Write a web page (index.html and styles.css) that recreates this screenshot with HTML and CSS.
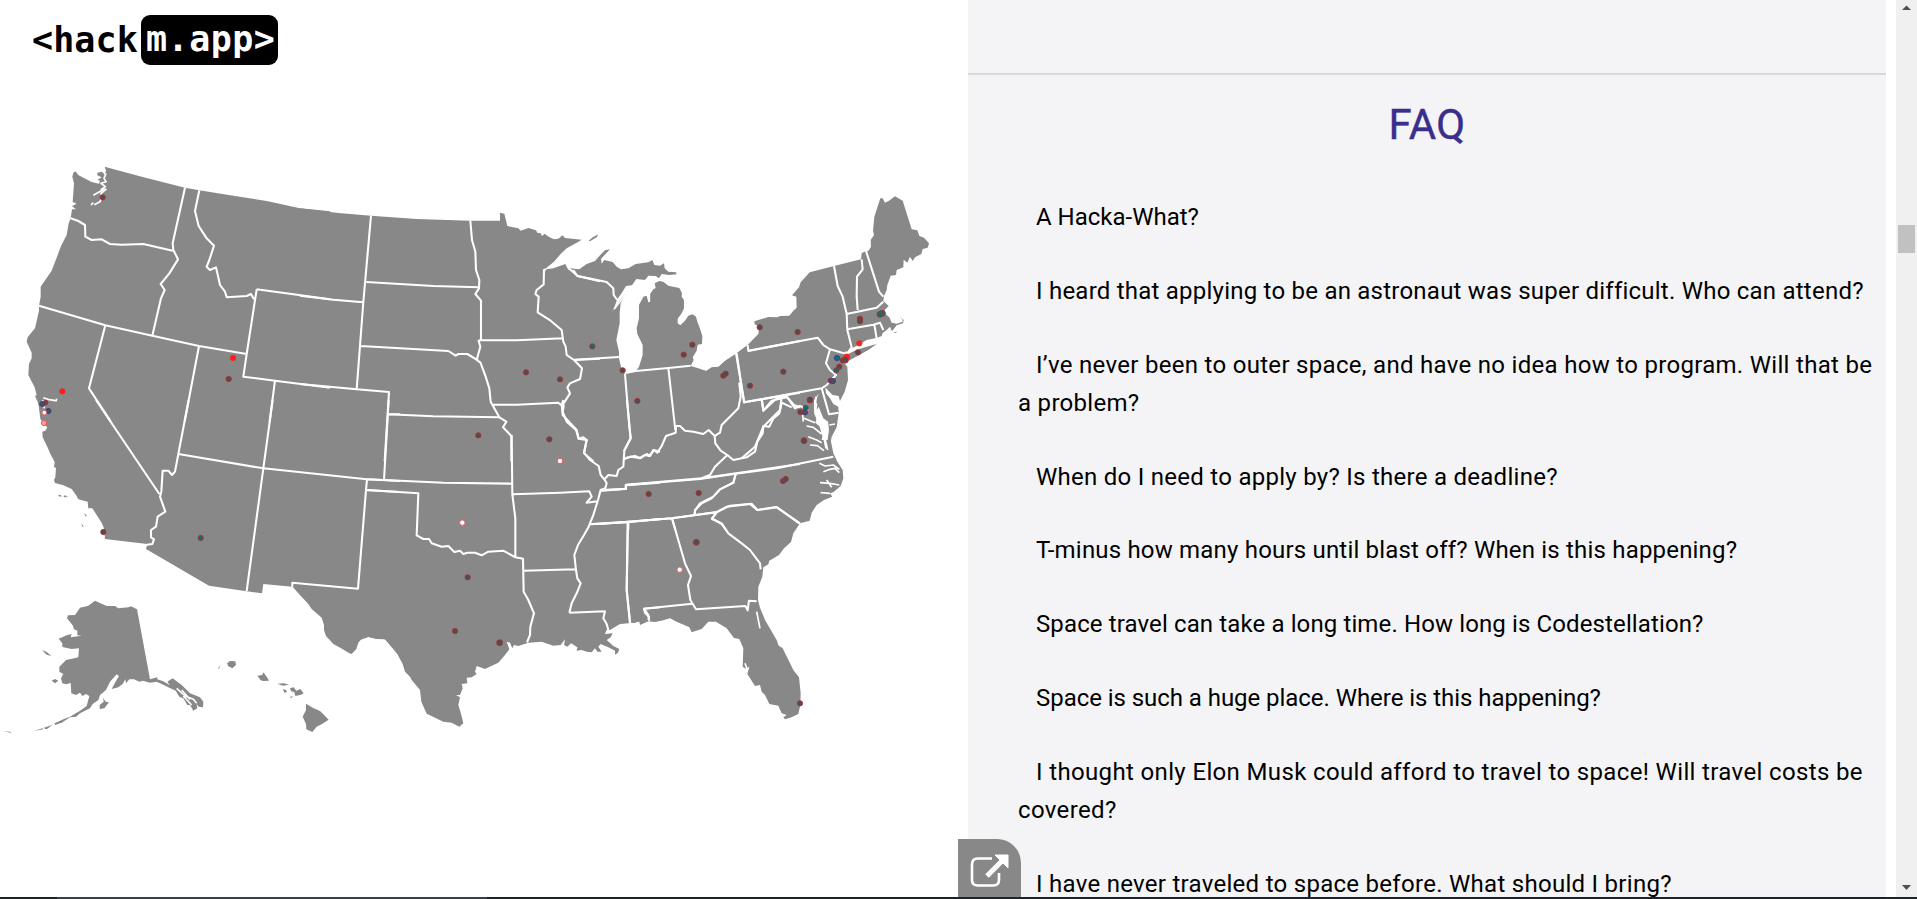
FILE: index.html
```
<!DOCTYPE html>
<html lang="en">
<head>
<meta charset="utf-8">
<title>hackm.app</title>
<link rel="stylesheet" href="styles.css">
</head>
<body>
<div class="page">
<main class="map-pane">
<header class="logo"><span class="logo-plain">&lt;hack</span><span class="logo-box">m.app&gt;</span></header>
<svg class="map" viewBox="0 0 2850 2694">
<g class="land">
<g transform="translate(0 420)">
<path d="M217 110L220 98L226 94L236 106L256 116L275 126L297 131L300 122L292 120L305 112L292 106L292 98L306 95L314 104L318 92L314 80L425 110L555 143L598 151L700 167L800 183L900 205L990 214V840H122L119 810L113 785L105 768L110 766L104 742L85 705L87 672L95 655L95 638L80 605L83 592L105 565L117 512L117 497L122 470L122 440L155 392L175 340L183 318L200 285L206 250L212 235L216 208L228 208L216 198L230 191L218 186L222 130Z"/>
</g>
<g transform="translate(0 1200)">
<path d="M120 0H1200V775L1190 755L1155 718L1128 717L1105 710L1085 716L1075 728L1069 747L1055 762L1048 760L1022 744L1000 732L978 708L972 690L972 675L965 653L935 627L925 612L895 580L878 560L790 552L786 580L740 574L627 557L438 447L442 432L315 417L312 385L305 368L290 345L277 325L265 325L263 305L235 298L228 285L215 267L190 256L165 249L162 240L166 232L168 205L162 200L164 186L150 160L144 145L128 112L127 95L136 92L142 82L128 70L120 50L117 20Z"/>
<path d="M175 284l8 2l2 4l-9-1zM190 289l6-4l2 4l8 2l-12 1zM252 340l8 6l-2 5zM243 370l8 9l-3 2zM196 340h5z"/>
<path d="M411 628L450 838L472 832L472 838L490 844L510 856L502 845L518 835L545 855L570 880L600 892L610 905L609 922L596 920L590 912L592 925L580 932L570 915L562 915L550 895L538 890L527 872L505 862L480 850L470 845L450 848L428 842L418 845L402 838L388 838L378 850L376 838L368 852L355 862L335 867L345 848L357 828L350 823L330 845L318 870L300 885L295 900L278 912L270 925L240 940L228 950L210 952L185 968L162 972L190 958L210 950L240 932L260 918L268 888L258 882L247 888L240 878L228 885L214 880L212 848L200 853L187 850L183 835L190 822L178 815L178 800L198 780L216 776L235 772L237 745L215 747L187 741L187 730L176 716L200 706L215 702L212 712L245 707L232 706L232 692L222 688L218 676L201 655L204 646L225 645L240 623L265 617L285 602L295 607L320 618L345 618L355 625L385 622L393 619Z"/>
<path d="M299 915l12-10l-2-12l8 12l10 2l-14 18l-14 2zM126 750l14 6l14 12l-14-4zM155 842l10-5l10 5l-10 8zM95 815l6 7zM163 970l20-8l8 3l-25 10zM130 984l28-10l-18 14zM102 993l25-8l3 3zM12 994l18 1l6 5l-10-3zM40 998h30z"/>
<path d="M681 790L690 783L706 784L708 795L697 805L685 799zM652 808l5-7l5-5l-4 8zM772 827l15-2l3-8l12 16l5 9l-17 1l-8-2zM832 851l20-1l15 4l-18 3zM848 867l10 3l3 5l-7 4zM868 892l10-4l-2 5zM870 865l11-3l8 10l12-5l10 13l-8 4l-17 4l-3-12l-10-2zM918 911l20 12l22 10l13 13l13 13l-20 13l-16 8l-13 16l-18-8l-1-16l-10-22l10-20z"/>
</g>
<g transform="translate(900 540)">
<path d="M0 85L115 99L213 107L350 117L510 122H600V98L613 101L622 138L655 145L662 152L685 144L708 151L712 158L722 160L726 168L734 161L746 170L762 178L775 176L788 166L795 174L845 179L833 187L800 205L782 222L762 245L738 265V840H0Z"/>
<path d="M866 182L878 172L895 163L890 172L870 184Z"/>
</g>
<g transform="translate(1560 600)">
<path d="M78 208L100 205L136 192L145 210L150 205L178 208L200 192L225 183L240 166L255 151L270 148L243 176L245 191L253 180L278 186L290 200L303 208L325 205L347 192L385 187L397 180L403 195L420 197L432 190L434 205L445 215L468 217L470 223L448 225L425 222L417 235L407 228L385 227L376 240L349 237L336 256L318 258L305 280L292 297L282 325L276 335L288 318L300 300L325 270L313 290L302 310L299 340L299 370L289 420L297 455L297 475L303 500L315 523L345 516L357 500L368 465L368 435L352 402L350 385L357 355L357 325L357 315L370 290L380 287L385 307L390 305L388 285L400 268L407 264L404 250L418 243L430 245L445 257L478 264L486 280L485 290L492 300L492 325L485 340L473 356L473 370L481 376L495 362L505 347L518 343L528 350L532 365L538 380L547 408L546 432L533 434L530 452L518 472L521 480L512 498L540 506L558 513L575 502L597 500L615 483L650 460L683 435L840 460V900L780 990H0V208Z"/>
</g>
<g transform="translate(2100 540)">
<path d="M0 569L20 573L35 563L55 561L75 543L108 522L142 496L175 462L178 440L164 433L163 424L205 411L232 412L240 408L268 407L280 392L290 383L289 350L276 346L297 322L302 307L329 277L402 258L483 238L485 220L493 215L505 213L513 200L512 180L522 165L519 152L523 110L541 55L548 55L555 68L567 62L585 49L608 62L635 148L652 151L658 168L672 173L687 190L683 203L668 207L664 222L645 232L638 243L630 230L622 248L611 239L610 262L590 270L588 285L572 287L562 315L560 330L552 348L550 363L566 378L554 390L557 403L568 412L575 428L590 431L608 425L606 415L598 410L611 420L609 430L590 436L576 454L570 440L560 450L548 459L545 468L532 473L500 480L475 495L450 508L443 523L470 509L500 500L530 492L505 510L478 525L440 545L435 552L442 560L444 600L434 635L420 663L416 648L398 645L385 632L376 622L378 640L390 655L400 672L415 680L416 700L410 742L395 770L390 797L382 785L387 750L384 725L370 715L362 695L356 680L350 690L352 672L346 665L357 640L342 660L342 690L350 715L346 728L360 740L368 768L362 790L380 812L395 812L400 840H0Z"/>
<path d="M580 457l12-2l-5 4zM612 456h6z"/>
</g>
<g transform="translate(1080 1200)">
<path d="M0 0H900V660L760 672L740 688L735 702L758 700L752 712L740 720L760 738L778 747L774 758L765 764L765 752L745 742L722 732L715 740L725 755L712 755L705 745L695 757L680 755L665 750L650 752L652 742L633 730L622 740L612 735L615 718L602 735L580 737L545 725L505 728L475 738L462 735L457 745L450 728L440 725L448 748L435 765L415 788L375 807L350 798L345 815L350 822L335 832L320 833L322 850L305 852L308 865L300 885L288 885L300 892L295 915L304 945L310 970L298 980L275 968L250 965L200 941L184 905L180 870L155 840L150 830L135 815L128 792L112 762L75 718L45 715L25 711L0 720Z"/>
</g>
<g transform="translate(1800 1320)">
<path d="M0 0H692L700 40L712 65L728 90L730 115L722 138L700 157L690 160L697 170L672 180L650 195L635 218L629 242L600 250L580 280L573 306L552 325L537 345L508 362L505 373L490 382L487 410L475 440L474 480L480 503L495 540L530 600L535 615L548 625L580 690L597 712L602 760L601 795L595 822L575 832L555 838L550 832L560 825L545 820L535 797L508 792L495 765L485 755L480 735L465 738L442 702L448 680L437 686L428 680L430 625L418 597L402 594L380 565L348 545L325 545L305 567L275 577L268 562L230 545L210 535L190 541L165 546L145 544L120 555L115 530L108 548L85 550L60 552L30 570H0Z"/>
</g>
</g>
<g class="water">
<path transform="translate(0 420)" d="M318 100L312 115L318 125L303 130L316 140L304 148L318 148L303 160L306 170L300 185L283 194M308 150L280 166M280 188L273 195M130 773L148 779L166 782M170 776L168 784M128 780L133 805"/>
<path transform="translate(2100 540)" d="M348 650L345 700L360 735L372 775L378 805M308 705L310 725M312 715L330 722L345 728M320 738L340 742L365 762M325 770L350 780L365 788M330 795L352 797L372 812M382 725L376 780L383 810M388 735L405 732M443 522L436 515M390 645L410 655"/>
<path transform="translate(1800 1320)" d="M658 70L675 78L700 75L718 88M670 95L690 88L705 85L718 98M660 128L690 130L718 135M662 158L690 160M695 142L680 120M470 515L475 540L480 565M535 603L542 620M435 670L442 690"/>
<path transform="translate(0 1200)" d="M530 865L555 888L580 898L590 910M545 870L570 898M550 888L575 915"/>
<path transform="translate(1560 600)" d="M332 258L308 295L282 328M384 235L362 253M388 280V305"/>
</g>
<g class="borders">
<path transform="translate(0 420)" d="M555 143L518 310L520 330L534 358L508 400L482 432L494 450L483 475L457 587M212 235L235 243L255 255L256 290L275 300L305 298L330 312L365 314L430 312L518 332M598 151L585 213L596 258L620 295L642 317L628 360L620 380L630 390L648 382L660 435L675 455L680 472L740 468L753 462L762 478M770 448L740 642L730 710L825 722L990 743M770 448L990 478M117 497L316 556L457 587L597 618L740 642M316 556L267 745L332 844M597 618L554 844M825 722L809 844"/>
<path transform="translate(0 1200)" d="M288 0L478 282M566 0L535 162L525 215L516 225L505 212L488 212L484 275L480 290L496 335L473 350L468 380L453 390L453 412L462 418L457 432L440 434M535 162L790 205L1100 238L1200 243M818 0L790 205L740 573M1166 0L1152 240M1164 43H1200M1101 238L1098 270L1074 566L877 548V560M1098 270L1200 276"/>
<path transform="translate(900 540)" d="M213 107L190 366L170 628M0 347L100 359L190 367M199 306L400 318L537 322M182 498L445 513L467 527L475 522L502 522L535 542M0 612L170 628L267 636L254 844M264 703L400 709L598 712M511 122L516 180L526 215L528 270L538 300L537 325L526 342L543 362V480L536 482L541 500L530 540L541 547L557 590L568 625L572 665L598 712L619 725L609 742L634 768V844M538 481L650 481L790 475M738 268L732 270L731 313L710 330L706 342L716 350L713 397L752 422L785 450L790 485L797 500L800 525L822 540L846 565L840 597L810 610L802 622L810 640L791 670L790 680M576 674L650 674L774 668L791 680L788 695L800 725L828 750L836 776L850 772L860 780L852 820L880 844M822 540L900 536M820 270L832 288L900 304"/>
<path transform="translate(1080 1200)" d="M20 238L72 240L250 248L456 251M19 270L175 280L170 406L190 417L207 417L215 430L245 440L265 438L283 456L300 452L310 462L322 458L345 458L365 466L385 455L430 452L466 472L489 476L491 575L505 600L522 640L511 680L510 705L501 727M455 105L457 283L466 355V472M458 283L600 278L688 274L695 290L680 308L712 304M490 512L647 508M723 270L797 267V256L900 248M692 373L803 367L900 357M803 367L800 570L810 672M628 638L735 634L730 655L740 672L745 690M610 0L605 15L608 45L650 90L656 116L680 120L672 158L690 180L716 198L722 225L733 238L740 250L736 265L722 270L714 300L700 345L686 380L672 405L654 435L643 465L648 510L652 535L662 550L650 580L635 610L628 638M733 238L745 225L770 228L775 210L790 200L793 152L812 115L801 0M793 175L815 170L840 175L860 162L870 168L880 150L900 155M900 622L852 626L865 645L866 660"/>
<path transform="translate(1560 600)" d="M148 206L173 228L260 246L280 265L281 285L292 300M163 479L297 471M315 522L328 680L332 715L312 752M315 516L445 504L512 497M445 504L466 690M312 778L330 770L345 768L360 774L375 765L388 768L402 750L412 758L425 738L438 708L467 698L468 678L480 678L495 692L520 695L550 702L566 690L584 708L600 698L605 675L620 660L635 645L655 625L662 590L658 550L664 570M650 460L672 607L840 578M683 435L685 453L840 423M584 708L586 730L602 752L622 765L640 780L680 772L705 755L712 725L728 700L730 678L748 680L760 655L778 640L785 608M725 598L730 632L755 602L785 595L800 590L822 615L840 622M785 608L815 622M622 765L585 800L570 825L540 836M260 870L318 866V854L545 835L648 820L840 792M648 820L640 848L600 868L575 895L545 910L525 930L524 942M215 972L325 965L456 955L590 937M325 965V990M456 955L466 990M690 912L620 920L590 937L576 955L605 972L618 990M690 912L712 930L770 922L840 970"/>
<path transform="translate(2100 540)" d="M402 258L413 318L428 350L440 402L442 450L455 502L440 522M485 238L488 268L471 290L470 350L473 390M498 213L537 335L550 350M440 402L530 383L550 365M442 448L520 434L540 428L550 450M523 434L530 475M145 512L353 473L370 495L390 508L440 522M390 508L378 550L390 570L408 585L380 615L365 625L133 667L108 520M365 625L387 703L416 698M410 660L416 658M186 660L190 692L230 655L262 652L285 685L300 678L325 690M245 650L240 690L190 740L165 800L125 835"/>
<path transform="translate(1800 1320)" d="M0 153L78 146V135L300 117L407 101L530 85L700 50M407 101L400 128L360 148L340 170L300 190L285 212L284 222M0 252L216 235L350 216L390 197L455 191L472 210L530 201L598 250M350 216L336 237L365 250L385 280L425 310L450 330L480 370L482 388M84 246L80 450L91 552M216 235L255 370L273 408L264 435L271 480L288 508L436 498L443 511L447 482L470 484M276 491L132 506L135 518L147 530V542"/>
</g>
<g class="pins">
<g transform="translate(0 420)"><circle cx="308" cy="172" r="8"/><circle class="hot" cx="699" cy="654" r="8"/><circle cx="686" cy="717" r="8"/><circle class="hot" cx="187" cy="754" r="8"/><circle cx="137" cy="788" r="7"/><circle class="blue" cx="127" cy="792" r="8"/><circle class="blue" cx="145" cy="813" r="8"/><circle class="open" cx="133" cy="818" r="7"/><circle class="pink" cx="132" cy="849" r="8"/></g>
<g transform="translate(0 1200)"><circle cx="310" cy="396" r="8"/><circle class="teal" cx="602" cy="414" r="8"/></g>
<g transform="translate(1080 1200)"><circle cx="355" cy="106" r="8"/><circle cx="568" cy="118" r="8"/><circle class="open" cx="600" cy="183" r="8"/><circle class="open" cx="307" cy="368" r="8"/><circle cx="323" cy="532" r="8"/><circle cx="285" cy="693" r="8"/><circle cx="419" cy="728" r="9"/></g>
<g transform="translate(1560 600)"><circle class="teal" cx="217" cy="439" r="8"/><circle cx="18" cy="517" r="8"/><circle cx="120" cy="538" r="8"/><circle cx="308" cy="511" r="8"/><circle cx="352" cy="603" r="8"/><circle cx="491" cy="464" r="8"/><circle cx="517" cy="434" r="8"/><circle cx="610" cy="527" r="8"/><circle cx="617" cy="521" r="8"/></g>
<g transform="translate(2100 540)"><circle cx="179" cy="442" r="8"/><circle cx="293" cy="456" r="8"/><circle cx="250" cy="575" r="8"/><circle cx="150" cy="617" r="8"/><circle cx="480" cy="416" r="8"/><circle cx="480" cy="424" r="8"/><circle class="teal" cx="547" cy="400" r="9"/><circle class="teal" cx="540" cy="403" r="9"/><circle class="hot" cx="478" cy="490" r="8"/><circle cx="474" cy="517" r="8"/><circle class="hot" cx="440" cy="531" r="9"/><circle cx="428" cy="541" r="8"/><circle cx="436" cy="540" r="9"/><circle class="teal blue-rim" cx="411" cy="534" r="8"/><circle cx="418" cy="560" r="8"/><circle class="teal" cx="409" cy="571" r="8"/><circle cx="392" cy="602" r="8"/><circle class="blue" cx="399" cy="603" r="8"/><circle cx="330" cy="660" r="9"/><circle class="teal" cx="317" cy="684" r="8"/><circle class="blue" cx="315" cy="697" r="8"/><circle cx="301" cy="696" r="8"/><circle cx="312" cy="782" r="9"/></g>
<g transform="translate(1800 1320)"><circle cx="146" cy="162" r="8"/><circle cx="296" cy="159" r="8"/><circle cx="549" cy="123" r="8"/><circle cx="557" cy="117" r="8"/><circle cx="289" cy="307" r="9"/><circle class="open" cx="239" cy="389" r="8"/><circle cx="600" cy="790" r="8"/></g>
</g>
</svg>
</main>
<aside class="site">
<hr class="rule">
<h1 class="title">FAQ</h1>
<ul class="questions">
<li class="q1">A Hacka-What?</li>
<li class="q2">I heard that applying to be an astronaut was super difficult. Who can attend?</li>
<li class="q3">I’ve never been to outer space, and have no idea how to program. Will that be<br>a problem?</li>
<li class="q4">When do I need to apply by? Is there a deadline?</li>
<li class="q5">T-minus how many hours until blast off? When is this happening?</li>
<li class="q6">Space travel can take a long time. How long is Codestellation?</li>
<li class="q7">Space is such a huge place. Where is this happening?</li>
<li class="q8">I thought only Elon Musk could afford to travel to space! Will travel costs be<br>covered?</li>
<li class="q9">I have never traveled to space before. What should I bring?</li>
</ul>
</aside>
<div class="scrollbar">
<svg class="arrow" viewBox="0 0 17 17"><path d="M4 10L8.500 5.500L13 10Z"/></svg>
<div class="thumb"></div>
<svg class="arrow arrow-down" viewBox="0 0 17 17"><path d="M4 5L8.500 10L13 5Z"/></svg>
</div>
<a class="open-link" href="#"><svg viewBox="0 0 63 58"><path class="frame" d="M34 19.500H20Q14 19.500 14 25.500V41Q14 46.500 20 46.500H35Q41 46.500 41 41V34"/><path class="shaft" d="M29 37L45 21"/><path class="head" d="M37 16H50V29Z"/></svg></a>
</div>
<footer class="edge"></footer>
</body>
</html>
```
FILE: styles.css
```
html, body { margin: 0; height: 100%; overflow: hidden; background: #fff; }
body { display: flex; flex-direction: column; }
.page { position: relative; flex: 1; min-height: 0; display: flex; overflow: hidden; }
.map-pane { position: relative; width: 968px; flex: none; }
.map { display: block; width: 950px; height: 898px; }
.logo { position: absolute; left: 32px; top: 15px; display: flex; align-items: center; height: 50px; font: bold 35px/48px "DejaVu Sans Mono", monospace; letter-spacing: 0.1px; color: #000; }
.logo-plain { width: 109px; }
.logo-box { width: 137px; height: 50px; padding-left: 5px; box-sizing: border-box; border-radius: 9px; background: #000; color: #fff; letter-spacing: 0.5px; }
.land { fill: #888; }
.water { fill: none; stroke: #fff; stroke-width: 5; stroke-linejoin: round; }
.borders { fill: none; stroke: #fff; stroke-width: 6.200; stroke-linejoin: round; }
.pins { fill: #514c4e; stroke: #b32b30; stroke-width: 2.500; }
.pins .hot { fill: #ff1e1e; stroke: #f52222; }
.pins .teal { fill: #0b7074; }
.pins .blue, .pins .blue-rim { stroke: #3d3d96; }
.pins .open { fill: #fff; stroke: #f04c50; }
.pins .pink { fill: #ff9c9c; stroke: #f04c50; }
.site { width: 918px; flex: none; background: #f4f4f6; font-family: Roboto, sans-serif; }
.rule { margin: 73px 0 0; border: 0; height: 2px; background: #d9d9db; }
.title { margin: 24px 0 0; font-size: 42px; line-height: 52px; font-weight: 400; text-align: center; color: #3a2e8c; letter-spacing: 0.4px; -webkit-text-stroke: 0.4px #3a2e8c; }
.questions { list-style: none; margin: 47px 0 0; padding: 0 0 0 50px; font-size: 24px; line-height: 38px; color: #000; white-space: nowrap; }
.questions li { margin-bottom: 35.85px; text-indent: 18px; }
.q2 { letter-spacing: 0.23px; }
.q3 { letter-spacing: 0.3px; }
.q4 { letter-spacing: 0.27px; }
.q5 { letter-spacing: 0.19px; }
.q6 { letter-spacing: 0.12px; }
.q7 { letter-spacing: -0.05px; }
.q8 { letter-spacing: 0.355px; }
.q9 { letter-spacing: 0.28px; }
.scrollbar { display: flex; flex-direction: column; width: 21px; margin-left: 10px; background: #f0f0f0; align-items: center; }
.arrow { width: 17px; height: 17px; fill: #505050; }
.thumb { width: 17px; height: 28px; margin-top: 208px; background: #c1c1c1; }
.arrow-down { margin-top: auto; }
.open-link { position: absolute; left: 958px; bottom: 0; width: 63px; height: 58px; border-top-right-radius: 24px; background: #888; }
.open-link svg { display: block; }
.frame { fill: none; stroke: #fff; stroke-width: 2.600; }
.shaft { fill: none; stroke: #fff; stroke-width: 5; }
.head { fill: #fff; stroke: #fff; stroke-width: 1; stroke-linejoin: round; }
.edge { flex: none; height: 2px; background: linear-gradient(90deg, #1d232a 57px, #3a4046 57px, #3a4046 487px, #1d232a 487px); }
```
